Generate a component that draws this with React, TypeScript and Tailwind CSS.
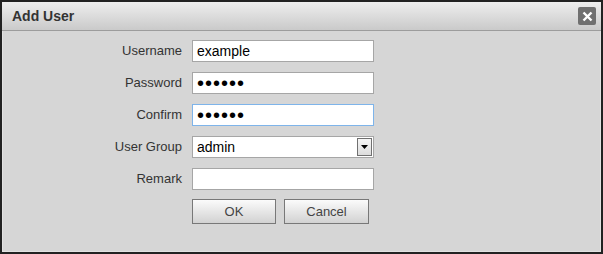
import { useState } from 'react';

interface Field {
  label: string;
  kind: 'text' | 'password' | 'select';
  value: string;
  focused?: boolean;
}

const fields: Field[] = [
  { label: 'Username', kind: 'text', value: 'example' },
  { label: 'Password', kind: 'password', value: '123456' },
  { label: 'Confirm', kind: 'password', value: '123456', focused: true },
  { label: 'User Group', kind: 'select', value: 'admin' },
  { label: 'Remark', kind: 'text', value: '' },
];

export default function App() {
  const [open, setOpen] = useState(true);

  if (!open) return null;

  return (
    <div
      className="w-[603px] h-[254px] bg-[#d6d6d6] border-2 border-[#222] flex flex-col"
      style={{ fontFamily: '"Liberation Sans", Arial, sans-serif' }}
    >
      {/* title bar */}
      <div className="h-[29px] shrink-0 flex items-center justify-between pl-[10px] pr-[5px] bg-gradient-to-b from-[#eeeeee] to-[#cacaca] border-b border-[#9c9c9c]">
        <span className="text-[14px] font-bold text-[#333]">Add User</span>
        <button
          onClick={() => setOpen(false)}
          className="w-[18px] h-[18px] rounded-[2px] bg-[#707070] flex items-center justify-center"
        >
          <svg width="11" height="11" viewBox="0 0 11 11">
            <path d="M1.5 1.5 L9.5 9.5 M9.5 1.5 L1.5 9.5" stroke="#fff" strokeWidth="2.4" />
          </svg>
        </button>
      </div>

      {/* form */}
      <div className="flex-1 flex flex-col gap-[10px] pt-[9px] border-x border-b border-[#e2e2e2]">
        {fields.map((f) => (
          <div key={f.label} className="flex items-center h-[22px]">
            <label className="w-[189px] pr-[10px] text-right text-[13px] text-[#333]">{f.label}</label>
            {f.kind === 'select' ? (
              <div className="w-[182px] h-[22px] bg-white border border-[#a6a6a6] flex items-center justify-between pl-[4px] pr-[1px]">
                <span className="text-[14px] text-black">{f.value}</span>
                <div className="w-[15px] h-[18px] bg-gradient-to-b from-[#f6f6f6] to-[#dcdcdc] border border-[#707070] flex items-center justify-center">
                  <svg width="7" height="4" viewBox="0 0 7 4">
                    <path d="M0 0 H7 L3.5 4 Z" fill="#000" />
                  </svg>
                </div>
              </div>
            ) : (
              <input
                type={f.kind}
                readOnly
                defaultValue={f.value}
                className={`w-[182px] h-[22px] bg-white border px-[4px] text-black outline-none leading-none ${
                  f.kind === 'password' ? 'text-[20px] tracking-[1px]' : 'text-[14px]'
                } ${f.focused ? 'border-[#7eb4ea]' : 'border-[#a6a6a6]'}`}
              />
            )}
          </div>
        ))}

        <div className="flex gap-[8px] pl-[189px] -mt-[1px]">
          <button className="w-[84px] h-[25px] text-[13px] text-[#444] border border-[#787878] bg-gradient-to-b from-[#fbfbfb] to-[#d2d2d2]">
            OK
          </button>
          <button className="w-[85px] h-[25px] text-[13px] text-[#444] border border-[#787878] bg-gradient-to-b from-[#fbfbfb] to-[#d2d2d2]">
            Cancel
          </button>
        </div>
      </div>
    </div>
  );
}
